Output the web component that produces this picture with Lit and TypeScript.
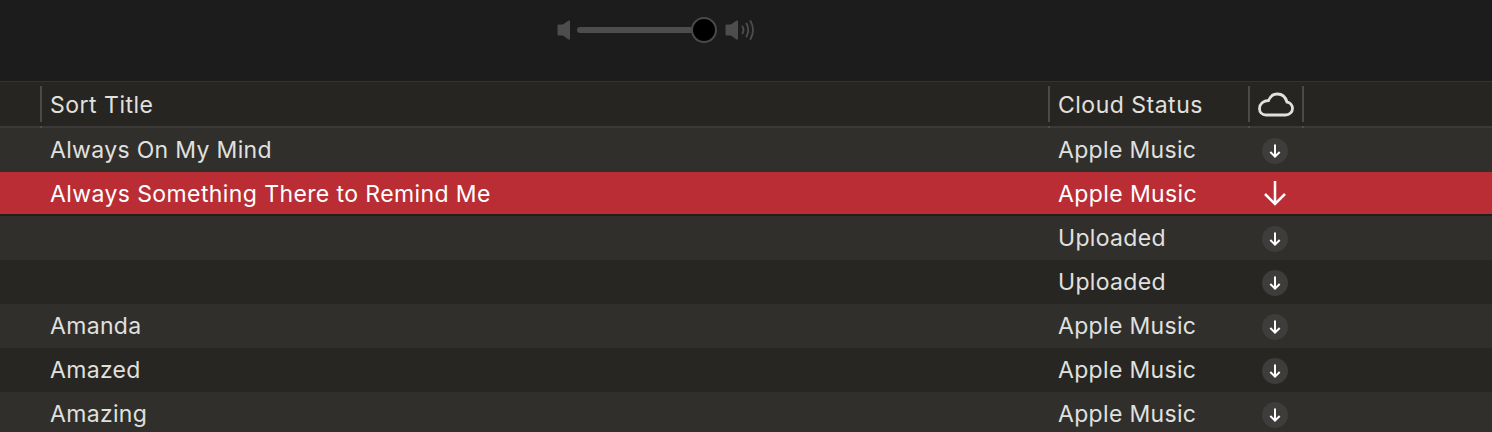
import { LitElement, html, css, svg } from "lit";
import { customElement } from "lit/decorators.js";

const rows = [
  ["Always On My Mind", "Apple Music"],
  ["Always Something There to Remind Me", "Apple Music"],
  ["", "Uploaded"],
  ["", "Uploaded"],
  ["Amanda", "Apple Music"],
  ["Amazed", "Apple Music"],
  ["Amazing", "Apple Music"],
];

const speaker = svg`<path d="M0.500 5.500 Q0.500 4.500 1.500 4.500 H6 L11.500 0.500 Q13 0 13 1.500 V18.500 Q13 20 11.500 19.500 L6 15.500 H1.500 Q0.500 15.500 0.500 14.500 Z" fill="#4d4d4d"/>`;

@customElement("app-root")
export class AppRoot extends LitElement {
  static styles = css`
    :host {
      display: block;
      width: 1492px;
      height: 432px;
      overflow: hidden;
      background: #1c1c1c;
      font-family: Inter, "Noto Sans", sans-serif;
      font-size: 23px;
      letter-spacing: 0.33px;
      color: #e0e0df;
    }
    .toolbar {
      height: 81px;
      box-sizing: border-box;
      padding: 17px 0 0 557px;
    }
    .volume {
      display: flex;
      align-items: center;
      height: 26px;
    }
    .track {
      margin-left: 7px;
      width: 116px;
      height: 6px;
      border-radius: 3px;
      background: #4d4d4d;
    }
    .knob {
      width: 26px;
      height: 26px;
      box-sizing: border-box;
      margin-left: -2px;
      border-radius: 50%;
      background: #000;
      border: 2px solid #4a4a4a;
    }
    .vol-hi { margin-left: 8px; }
    .head {
      height: 47px;
      box-sizing: border-box;
      background: #262521;
      border-top: 1px solid #353432;
      border-bottom: 2px solid #3b3a38;
      display: grid;
      grid-template-columns: 40px 1008px 200px 54px 1fr;
      align-items: center;
    }
    .col {
      position: relative;
      height: 36px;
      box-sizing: border-box;
      border-left: 2px solid #4a4a48;
      padding: 2px 0 0 8px;
      display: flex;
      align-items: center;
      letter-spacing: 0.5px;
    }
    .col::after {
      content: "";
      position: absolute;
      left: -2px;
      top: 40px;
      width: 2px;
      height: 2px;
      background: #4f4f4d;
    }
    .cloud-col { padding: 0 0 0 8px; }
    .end { position: relative; border-left: 2px solid #4a4a48; height: 36px; }
    .end::after {
      content: "";
      position: absolute;
      left: -2px;
      top: 40px;
      width: 2px;
      height: 2px;
      background: #4f4f4d;
    }
    .row {
      height: 44px;
      display: grid;
      grid-template-columns: 40px 1008px 200px 54px 1fr;
      align-items: center;
      background: #272622;
    }
    .row.odd { background: #302f2c; }
    .row.sel {
      background: #bb2d34;
      color: #fff;
      letter-spacing: 0.4px;
      box-shadow: inset 0 -2px 0 #1f1f1d;
    }
    .cell { padding-left: 10px; white-space: nowrap; }
    .dl { display: flex; justify-content: center; padding-top: 1px; }
    .row.sel .dl { padding: 0 0 2px; }
    svg { display: block; }
  `;

  render() {
    return html`
      <div class="toolbar">
        <div class="volume">
          <svg width="13" height="20" viewBox="0 0 13 20">${speaker}</svg>
          <div class="track"></div>
          <div class="knob"></div>
          <svg class="vol-hi" width="30" height="24" viewBox="0 0 30 24">
            <g transform="translate(0 2)">${speaker}</g>
            <path d="M17.500 8.500 Q19.500 12 17.500 15.500 M21.500 5.500 Q25 12 21.500 18.500 M25.500 3 Q30.500 12 25.500 21" fill="none" stroke="#4d4d4d" stroke-width="1.800" stroke-linecap="round"/>
          </svg>
        </div>
      </div>
      <div class="head">
        <div></div>
        <div class="col">Sort Title</div>
        <div class="col">Cloud Status</div>
        <div class="col cloud-col">
          <svg width="36" height="25" viewBox="0 0 36 25">
            <path d="M8 23 H27.500 C31.500 23 34.500 20 34.500 16.500 C34.500 13 32 10.500 29 10 C27.500 5 24 2 19.500 2 C15 2 12 4.500 10.500 8.500 C5.500 8.500 1.500 12 1.500 16.500 C1.500 20 4 23 8 23 Z" fill="none" stroke="#e0e0df" stroke-width="2.800"/>
          </svg>
        </div>
        <div class="end"></div>
      </div>
      ${rows.map((r, i) => {
        const sel = i === 1;
        return html`<div class="row ${i % 2 === 0 ? "odd" : ""} ${sel ? "sel" : ""}">
          <div></div>
          <div class="cell">${r[0]}</div>
          <div class="cell">${r[1]}</div>
          <div class="dl">
            ${sel
              ? html`<svg width="26" height="26" viewBox="0 0 26 26"><path d="M13 1 V23.500 M3 14 L13 24 L23 14" fill="none" stroke="#fff" stroke-width="2.500"/></svg>`
              : html`<svg width="26" height="26" viewBox="0 0 26 26"><circle cx="13" cy="13" r="13" fill="#3e3d3b"/><path d="M13 6.500 V18.500 M8.300 14 L13 18.700 L17.700 14" fill="none" stroke="#fff" stroke-width="2"/></svg>`}
          </div>
          <div></div>
        </div>`;
      })}
    `;
  }
}
